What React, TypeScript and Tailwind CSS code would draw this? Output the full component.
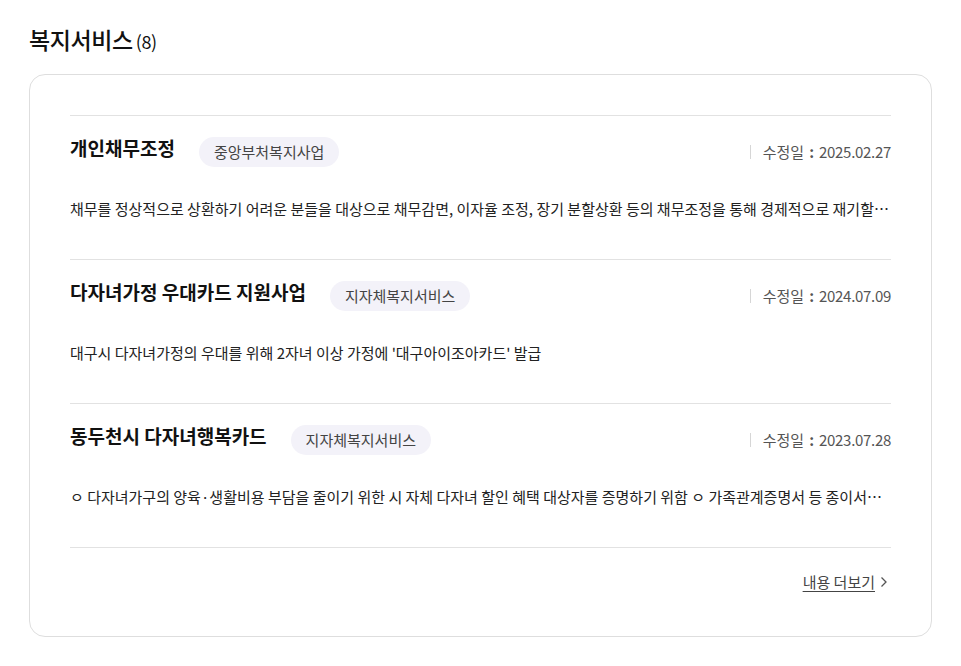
import React from "react";

const items = [
  {
    title: "개인채무조정",
    badge: "중앙부처복지사업",
    date: "2025.02.27",
    desc: "채무를 정상적으로 상환하기 어려운 분들을 대상으로 채무감면, 이자율 조정, 장기 분할상환 등의 채무조정을 통해 경제적으로 재기할 수 있도록 지원합니다.",
  },
  {
    title: "다자녀가정 우대카드 지원사업",
    badge: "지자체복지서비스",
    date: "2024.07.09",
    desc: "대구시 다자녀가정의 우대를 위해 2자녀 이상 가정에 '대구아이조아카드' 발급",
  },
  {
    title: "동두천시 다자녀행복카드",
    badge: "지자체복지서비스",
    date: "2023.07.28",
    desc: "ㅇ 다자녀가구의 양육·생활비용 부담을 줄이기 위한 시 자체 다자녀 할인 혜택 대상자를 증명하기 위함 ㅇ 가족관계증명서 등 종이서류 없이 확인 가능",
  },
];

export default function App() {
  return (
    <div
      className="min-h-[666px] bg-white px-[29px] pt-[22px]"
      style={{ fontFamily: '"Noto Sans CJK KR", "Noto Sans", sans-serif' }}
    >
      <h2 className="flex items-baseline h-[34px] leading-[34px] mb-[18px] text-[#111]">
        <span className="text-[23px] font-medium tracking-[-0.4px]">복지서비스</span>
        <span className="ml-[3px] text-[18px] font-normal tracking-[-0.5px]">(8)</span>
      </h2>
      <div className="border border-[#dedede] rounded-[16px] px-[40px] pt-[40px] pb-[43px]">
        <ul className="border-b border-[#e2e2e2]">
          {items.map((it) => (
            <li key={it.title} className="border-t border-[#e2e2e2] pt-[21px] pb-[39px]">
              <div className="flex items-start h-[30px]">
                <span className="text-[19px] leading-[22px] font-bold text-[#111]">
                  {it.title}
                </span>
                <span className="ml-[24px] h-[30px] px-[15px] rounded-full bg-[#f3f2f9] text-[15px] leading-[30px] text-[#444]">
                  {it.badge}
                </span>
                <div className="ml-auto flex items-center h-[30px] text-[15px] text-[#555]">
                  <span className="w-px h-[14px] bg-[#d6d6d6] mr-[12px]" />
                  <span>수정일</span>
                  <span className="mx-[5px] font-bold">:</span>
                  <span className="tracking-[-0.3px]">{it.date}</span>
                </div>
              </div>
              <p className="mt-[31px] text-[15px] leading-[22px] text-[#222] truncate">
                {it.desc}
              </p>
            </li>
          ))}
        </ul>
        <div className="mt-[23px] flex justify-end items-center h-[22px] text-[15px] text-[#444]">
          <a className="underline underline-offset-[3px]" href="#">
            내용 더보기
          </a>
          <svg width="14" height="14" viewBox="0 0 14 14" className="ml-[2px]">
            <path d="M4.5 2.5 L9 7 L4.5 11.5" fill="none" stroke="#555" strokeWidth="1.3" />
          </svg>
        </div>
      </div>
    </div>
  );
}
